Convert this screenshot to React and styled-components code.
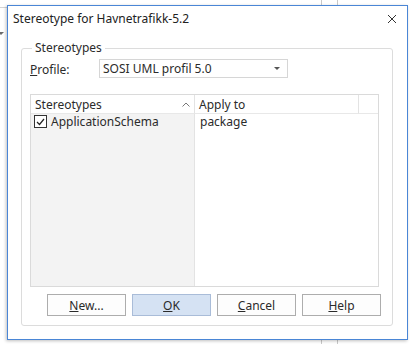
import React from 'react'
import styled, { createGlobalStyle } from 'styled-components'

const Global = createGlobalStyle`
  html, body {
    margin: 0;
    padding: 0;
    background: #fff;
  }
  body {
    font-family: 'Noto Sans', 'Open Sans', sans-serif;
    font-size: 12px;
    color: #2b2b2b;
  }
`

const Page = styled.div`
  width: 411px;
  height: 344px;
  display: flex;
  overflow: hidden;
  background:
    linear-gradient(#c9c9c9, #c9c9c9) 321px 0 / 1px 100% no-repeat,
    linear-gradient(#c9c9c9, #c9c9c9) 337px 0 / 1px 100% no-repeat,
    #fff;
`

const LeftStrip = styled.div`
  width: 7px;
  flex: none;
  display: flex;
  flex-direction: column;
`

const StripLine = styled.div`
  margin-top: 7px;
  border-top: 1px solid #d4d4d4;
`

const StripArrow = styled.div`
  margin-top: 24px;
  margin-left: -2px;
  width: 0;
  height: 0;
  border-left: 3px solid transparent;
  border-right: 3px solid transparent;
  border-top: 3px solid #6a6a6a;
`

const Dialog = styled.div`
  margin-top: 5px;
  width: 401px;
  height: 335px;
  box-sizing: border-box;
  border: 1px solid #4a86d6;
  background: #fff;
  box-shadow: -1px 1px 3px rgba(0, 0, 0, 0.25);
  display: flex;
  flex-direction: column;
  flex: none;
`

const TitleBar = styled.div`
  height: 25px;
  display: flex;
  align-items: center;
  justify-content: space-between;
  padding: 0 10px 0 5px;
`

const Title = styled.span`
  font-size: 12px;
  color: #222;
`

const Close = styled.svg`
  width: 10px;
  height: 10px;
`

const Group = styled.fieldset`
  margin: 9px 0 0 13px;
  width: 372px;
  height: 286px;
  box-sizing: border-box;
  border: 1px solid #dcdcdc;
  border-radius: 3px;
  padding: 3px 13px 0 8px;
  min-width: 0;
  display: flex;
  flex-direction: column;
`

const Legend = styled.legend`
  padding: 0 3px;
  margin-left: 2px;
  line-height: 16px;
  font-size: 12px;
`

const ProfileRow = styled.div`
  display: flex;
  align-items: center;
  height: 19px;
`

const Label = styled.label`
  width: 69px;
  padding-top: 2px;
`

const Combo = styled.div`
  width: 189px;
  height: 19px;
  box-sizing: border-box;
  border: 1px solid #d6d6d6;
  display: flex;
  align-items: center;
  justify-content: space-between;
  padding: 0 7px 0 3px;
`

const ComboArrow = styled.span`
  width: 0;
  height: 0;
  border-left: 3px solid transparent;
  border-right: 3px solid transparent;
  border-top: 3px solid #555;
`

const List = styled.div`
  margin-top: 16px;
  width: 349px;
  height: 193px;
  box-sizing: border-box;
  border: 1px solid #dadada;
  display: grid;
  grid-template-columns: 164px 164px 1fr;
  grid-template-rows: 19px 1fr;
`

const HeadCell = styled.div`
  display: flex;
  align-items: center;
  justify-content: space-between;
  padding: 0 ${p => (p.$sorted ? '4px' : '3px')} 0 4px;
  border-right: ${p => (p.$last ? 'none' : '1px solid #e3e3e3')};
  border-bottom: 1px solid #e8e8e8;
  background: #fff;
`

const SortIcon = styled.svg`
  width: 8px;
  height: 5px;
`

const Column = styled.div`
  background: ${p => (p.$shaded ? '#f3f3f3' : '#fff')};
  border-right: ${p => (p.$shaded ? '1px solid #e3e3e3' : 'none')};
  grid-column: ${p => p.$span || 'auto'};
`

const Cell = styled.div`
  height: 15px;
  display: flex;
  align-items: center;
  gap: 4px;
  padding-left: ${p => p.$pad || 3}px;
`

const Check = styled.span`
  width: 11px;
  height: 11px;
  border: 1px solid #333;
  background: #fff;
  display: flex;
  align-items: center;
  justify-content: center;
`

const Buttons = styled.div`
  margin-top: 7px;
  width: 351px;
  display: flex;
  justify-content: flex-end;
  gap: 6px;
`

const Button = styled.button`
  width: 79px;
  height: 22px;
  box-sizing: border-box;
  font-family: inherit;
  font-size: 12px;
  color: #2b2b2b;
  background: ${p => (p.$primary ? '#d5e2f3' : '#fdfdfd')};
  border: 1px solid ${p => (p.$primary ? '#a9bcd8' : '#adadad')};
  padding: 0;

  u {
    text-decoration: underline;
    text-underline-offset: 1px;
  }
`

export default function App() {
  return (
    <Page>
      <Global />
      <LeftStrip>
        <StripLine />
        <StripArrow />
      </LeftStrip>
      <Dialog>
        <TitleBar>
          <Title>Stereotype for Havnetrafikk-5.2</Title>
          <Close viewBox="0 0 10 10">
            <path d="M1 1 L9 9 M9 1 L1 9" stroke="#333" strokeWidth="1" />
          </Close>
        </TitleBar>
        <Group>
          <Legend>Stereotypes</Legend>
          <ProfileRow>
            <Label>
              <u>P</u>rofile:
            </Label>
            <Combo>
              <span>SOSI UML profil 5.0</span>
              <ComboArrow />
            </Combo>
          </ProfileRow>
          <List>
            <HeadCell $sorted>
              <span>Stereotypes</span>
              <SortIcon viewBox="0 0 8 5">
                <path d="M0.5 4.5 L4 1 L7.5 4.5" fill="none" stroke="#777" strokeWidth="1" />
              </SortIcon>
            </HeadCell>
            <HeadCell>Apply to</HeadCell>
            <HeadCell $last />
            <Column $shaded>
              <Cell $pad={3}>
                <Check>
                  <svg width="9" height="8" viewBox="0 0 9 8">
                    <path d="M1 4 L3.5 6.5 L8 1" fill="none" stroke="#222" strokeWidth="1.2" />
                  </svg>
                </Check>
                ApplicationSchema
              </Cell>
            </Column>
            <Column $span="2 / 4">
              <Cell $pad={5}>package</Cell>
            </Column>
          </List>
          <Buttons>
            <Button>
              <u>N</u>ew...
            </Button>
            <Button $primary>
              <u>O</u>K
            </Button>
            <Button>
              <u>C</u>ancel
            </Button>
            <Button>
              <u>H</u>elp
            </Button>
          </Buttons>
        </Group>
      </Dialog>
    </Page>
  )
}
